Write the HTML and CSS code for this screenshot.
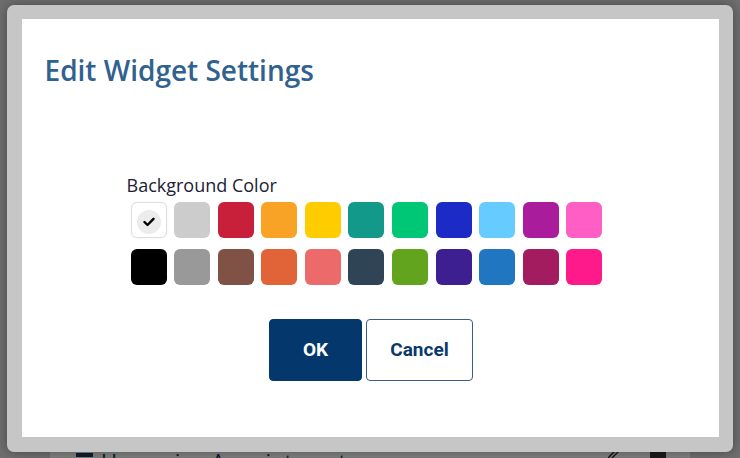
FILE: index.html
```html
<!DOCTYPE html>
<html lang="en">
<head>
<meta charset="utf-8">
<title>Edit Widget Settings</title>
<link rel="stylesheet" href="styles.css">
</head>
<body>
  <main class="page">
    <section class="card">
      <header class="card-head">
        <span class="card-icon"></span>
        <h3 class="card-title">Upcoming Appointments</h3>
        <span class="card-spacer"></span>
        <svg class="card-edit" width="14" height="14" viewBox="0 0 14 14"><path d="M2 12 L3 9 L10 2 L12 4 L5 11 Z" fill="none" stroke="#222" stroke-width="1.4"/></svg>
        <span class="card-handle"></span>
      </header>
    </section>
  </main>

  <div class="overlay">
    <div class="dialog">
      <div class="dialog-body">
        <h2 class="dialog-title">Edit Widget Settings</h2>
        <div class="picker">
          <div class="picker-label">Background Color</div>
          <div class="swatches">
            <button class="swatch selected" style="background:#ffffff"><span class="check"><svg width="12" height="10" viewBox="0 0 12 10"><path d="M1.5 5 L4.5 8 L10.5 1.8" fill="none" stroke="#000" stroke-width="2.4" stroke-linecap="round" stroke-linejoin="round"/></svg></span></button>
            <button class="swatch" style="background:#cccccc"></button>
            <button class="swatch" style="background:#c8203a"></button>
            <button class="swatch" style="background:#f9a326"></button>
            <button class="swatch" style="background:#ffcc00"></button>
            <button class="swatch" style="background:#13998a"></button>
            <button class="swatch" style="background:#00c775"></button>
            <button class="swatch" style="background:#1c2ac6"></button>
            <button class="swatch" style="background:#66ccff"></button>
            <button class="swatch" style="background:#aa1c9c"></button>
            <button class="swatch" style="background:#ff5ec4"></button>

            <button class="swatch" style="background:#000000"></button>
            <button class="swatch" style="background:#999999"></button>
            <button class="swatch" style="background:#7f5245"></button>
            <button class="swatch" style="background:#e06438"></button>
            <button class="swatch" style="background:#ed6a6a"></button>
            <button class="swatch" style="background:#2f4556"></button>
            <button class="swatch" style="background:#63a41e"></button>
            <button class="swatch" style="background:#3e1f91"></button>
            <button class="swatch" style="background:#2176c2"></button>
            <button class="swatch" style="background:#a21c5f"></button>
            <button class="swatch" style="background:#ff1a8c"></button>
          </div>
        </div>
        <div class="actions">
          <button class="btn btn-primary">OK</button>
          <button class="btn btn-secondary">Cancel</button>
        </div>
      </div>
    </div>
  </div>
</body>
</html>
```
FILE: styles.css
```css
* { box-sizing: border-box; }

html, body {
  margin: 0;
  padding: 0;
  height: 100%;
  overflow: hidden;
}

body {
  background: #dcdcdc;
  font-family: "Open Sans", "Liberation Sans", sans-serif;
}

.page {
  padding: 440px 50px 0 50px;
}

.card {
  background: #ffffff;
  height: 200px;
}

.card-head {
  display: flex;
  align-items: flex-start;
  padding: 10px 24px 0 26px;
}

.card-icon {
  width: 17px;
  height: 14px;
  margin-top: 3px;
  border-top: 4px solid #1d3b5e;
  margin-right: 8px;
}

.card-title {
  margin: 0;
  font-size: 22px;
  line-height: 22px;
  font-weight: 400;
  color: #1d3b5e;
}

.card-spacer { flex: 1; }

.card-edit {
  margin-top: -2px;
  margin-right: 30px;
}

.card-handle {
  width: 16px;
  height: 20px;
  margin-top: 1px;
  background: #333;
}

.overlay {
  position: fixed;
  inset: 0;
  background: rgba(0, 0, 0, 0.5);
  display: flex;
  justify-content: center;
  align-items: flex-start;
  padding-top: 5px;
}

.dialog {
  width: 726px;
  height: 447px;
  background: #c6c6c6;
  border-radius: 7px;
  padding: 14px 14.5px 15px 14.5px;
  box-shadow: 0 0 12px rgba(0, 0, 0, 0.35);
}

.dialog-body {
  background: #ffffff;
  height: 100%;
  padding: 33px 23px 0 23px;
  display: flex;
  flex-direction: column;
}

.dialog-title {
  margin: 0;
  font-size: 28px;
  line-height: 36px;
  font-weight: 600;
  color: #30618f;
}

.picker {
  margin: 85px 0 0 82px;
}

.picker-label {
  font-size: 18px;
  line-height: 24px;
  color: #1a2233;
}

.swatches {
  margin: 5px 0 0 4px;
  display: grid;
  grid-template-columns: repeat(11, 36px);
  column-gap: 7.6px;
  row-gap: 10.5px;
}

.swatch {
  width: 36px;
  height: 36px;
  border: none;
  padding: 0;
  border-radius: 6px;
  display: flex;
  align-items: center;
  justify-content: center;
}

.swatch.selected {
  border: 1px solid #dedede;
  box-shadow: 0 0 2px rgba(0, 0, 0, 0.08);
}

.check {
  width: 24px;
  height: 24px;
  border-radius: 50%;
  background: #ececec;
  display: flex;
  align-items: center;
  justify-content: center;
  margin-top: 3px;
}

.actions {
  margin-top: 34px;
  display: flex;
  justify-content: center;
  gap: 4px;
  padding-left: 2px;
}

.btn {
  height: 62px;
  border-radius: 4px;
  font-family: Roboto, "Liberation Sans", sans-serif;
  font-weight: 700;
  font-size: 19px;
  padding: 0;
}

.btn-primary {
  width: 93px;
  background: #04376b;
  border: 1px solid #04376b;
  color: #ffffff;
}

.btn-secondary {
  width: 107px;
  background: #ffffff;
  border: 1px solid #3a5e88;
  color: #0b3a6a;
}
```
